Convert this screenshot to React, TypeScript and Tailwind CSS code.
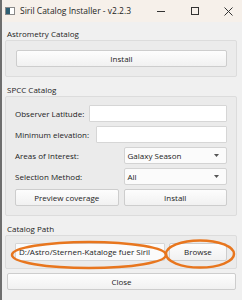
import React from "react";

function WinButton({ children, className = "" }: { children: React.ReactNode; className?: string }) {
  return (
    <div
      className={`h-[17px] flex items-center justify-center rounded-[2px] border border-[#cdcdcd] bg-gradient-to-b from-[#fdfdfd] to-[#f1f1f1] text-[#1c1c1c] ${className}`}
    >
      {children}
    </div>
  );
}

function Combo({ value }: { value: string }) {
  return (
    <div className="h-[17px] flex items-center justify-between pl-[3px] pr-[7px] rounded-[2px] border border-[#d3d3d3] bg-[#fbfbfb]">
      <span>{value}</span>
      <svg width="5" height="3" viewBox="0 0 5 3">
        <path d="M0 0h5L2.5 3z" fill="#555" />
      </svg>
    </div>
  );
}

function GroupLabel({ children }: { children: React.ReactNode }) {
  return <div className="h-[12px] leading-[12px] pl-[2px]">{children}</div>;
}

export default function App() {
  return (
    <div className="relative w-[242px] h-[300px] overflow-hidden flex flex-col bg-[#f0f0f0] border-l-2 border-[#6e6e6e] font-['Open_Sans',sans-serif] text-[8px] text-[#1c1c1c]">
      {/* title bar */}
      <div className="h-[22px] shrink-0 flex items-center bg-[#f6f0ea]">
        <div className="ml-[3px] w-[10px] h-[8px] flex border border-[#8a8a8a] bg-white">
          <div className="w-[4px] bg-[#2f5f73]" />
        </div>
        <span className="ml-[5px] text-[8.5px] text-[#1e1e1e]">Siril Catalog Installer - v2.2.3</span>
        <div className="ml-auto flex items-center h-full">
          <div className="w-[8px] h-px bg-[#333] mr-[26px]" />
          <div className="w-[8px] h-[8px] border border-[#333] mr-[25px]" />
          <svg width="9" height="9" viewBox="0 0 9 9" className="mr-[9px]">
            <path d="M0.5 0.5l8 8M8.5 0.5l-8 8" stroke="#333" strokeWidth="1" />
          </svg>
        </div>
      </div>

      <div className="flex flex-col pl-[3px] pr-[5px]">
        <div className="mt-[6px]">
          <GroupLabel>Astrometry Catalog</GroupLabel>
        </div>
        <div className="border border-[#dcdcdc] bg-[#ebebeb] rounded-[2px] pt-[9px] pb-[9px] pl-[10px] pr-[9px]">
          <WinButton>Install</WinButton>
        </div>

        <div className="mt-[7px]">
          <GroupLabel>SPCC Catalog</GroupLabel>
        </div>
        <div className="border border-[#dcdcdc] bg-[#ebebeb] rounded-[2px] pt-[8px] pb-[9px] pl-[9px] pr-[9px] flex flex-col gap-[4px]">
          <div className="flex items-center h-[17px]">
            <span className="w-[74px] shrink-0">Observer Latitude:</span>
            <div className="flex-1 h-[17px] border border-[#d6d6d6] bg-white rounded-[1px]" />
          </div>
          <div className="flex items-center h-[17px]">
            <span className="w-[81px] shrink-0">Minimum elevation:</span>
            <div className="flex-1 h-[17px] border border-[#d6d6d6] bg-white rounded-[1px]" />
          </div>
          <div className="grid grid-cols-2 gap-x-[5px] gap-y-[4px] items-center">
            <span>Areas of Interest:</span>
            <Combo value="Galaxy Season" />
            <span>Selection Method:</span>
            <Combo value="All" />
            <WinButton>Preview coverage</WinButton>
            <WinButton>Install</WinButton>
          </div>
        </div>

        <div className="mt-[7px]">
          <GroupLabel>Catalog Path</GroupLabel>
        </div>
        <div className="border border-[#dcdcdc] bg-[#ebebeb] rounded-[2px] pt-[7px] pb-[7px] pl-[9px] pr-[9px] flex gap-[4px]">
          <div className="w-[150px] h-[18px] flex items-center pl-[3px] border border-[#d6d6d6] bg-[#fbfbfb] rounded-[1px] whitespace-nowrap overflow-hidden">
            D:/Astro/Sternen-Kataloge fuer Siril
          </div>
          <WinButton className="flex-1 h-[18px]">Browse</WinButton>
        </div>

        <div className="mt-[4px] ml-[2px] mr-px">
          <WinButton>Close</WinButton>
        </div>
      </div>

      {/* orange annotations */}
      <svg className="absolute left-0 top-0 pointer-events-none" width="242" height="300" viewBox="0 0 242 300">
        <ellipse cx="87" cy="255" rx="77" ry="13" fill="none" stroke="#e8761e" strokeWidth="2.5" />
        <ellipse cx="198" cy="254" rx="34" ry="13.5" fill="none" stroke="#e8761e" strokeWidth="2.5" />
      </svg>
    </div>
  );
}
